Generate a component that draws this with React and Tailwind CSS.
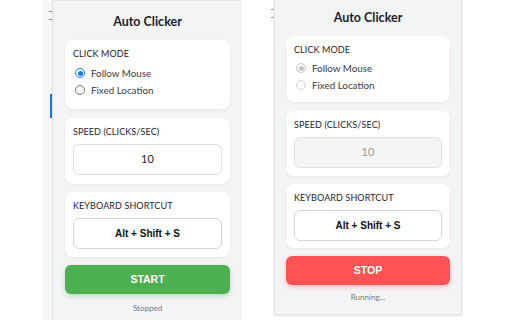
const sans = { fontFamily: "Lato, 'Open Sans', sans-serif" };

const Radio = ({ checked, disabled, label }) => {
  const ring = disabled
    ? checked
      ? "border-[#c4c4c4]"
      : "border-[#d4d4d4]"
    : checked
    ? "border-[#1a73e8]"
    : "border-[#767676]";
  return (
    <div className="flex items-center h-[16px] pl-[2px]">
      <span
        className={`w-[10px] h-[10px] rounded-full border-[1.5px] ${ring} bg-white flex items-center justify-center`}
      >
        {checked && (
          <span
            className={`w-[5px] h-[5px] rounded-full ${disabled ? "bg-[#c4c4c4]" : "bg-[#1a73e8]"}`}
          />
        )}
      </span>
      <span className="ml-[6px] text-[9.8px] text-[#3a3a44]">{label}</span>
    </div>
  );
};

const Card = ({ label, children, pb }) => (
  <div className={`bg-white rounded-[8px] shadow-[0_1px_3px_rgba(0,0,0,0.06)] px-2 pt-2 ${pb}`}>
    <div className="text-[9px] leading-[12px] text-[#1f2230] tracking-[0.1px]">{label}</div>
    {children}
  </div>
);

const Panel = ({ running }) => (
  <div className={`flex flex-col ${running ? "px-[11px]" : "px-3"}`} style={sans}>
    <div className="text-[12.5px] leading-[16px] font-bold text-[#1b1e2b] text-center mb-[10px]">
      Auto Clicker
    </div>
    <Card label="CLICK MODE" pb={running ? "pb-[9px]" : "pb-[11px]"}>
      <div className={running ? "mt-[4px] flex flex-col gap-[1px]" : "mt-[5px] flex flex-col gap-[1px]"}>
        <Radio checked disabled={running} label="Follow Mouse" />
        <Radio disabled={running} label="Fixed Location" />
      </div>
    </Card>
    <div className="h-[9px]" />
    <Card label="SPEED (CLICKS/SEC)" pb={running ? "pb-[8px]" : "pb-[9px]"}>
      <div
        className={`mt-[6px] h-[31px] rounded-[6px] border-[1.5px] flex items-center justify-center text-[11px] ${
          running ? "border-[#e2e2e2] bg-[#f5f5f5] text-[#9a9a9a]" : "border-[#dedede] bg-white text-[#1b1e2b]"
        }`}
      >
        10
      </div>
    </Card>
    <div className="h-[8px]" />
    <Card label="KEYBOARD SHORTCUT" pb={running ? "pb-[7px]" : "pb-[8px]"}>
      <div
        className="mt-[6px] h-[31px] rounded-[6px] border-[1.5px] border-[#d6d6d6] bg-white flex items-center justify-center text-[10px] font-bold text-[#111]"
        style={{ fontFamily: "'Liberation Sans', Arial, sans-serif" }}
      >
        Alt + Shift + S
      </div>
    </Card>
    <div
      className={`mt-[8px] h-[29px] rounded-[6px] flex items-center justify-center text-white font-bold text-[10.5px] ${
        running
          ? "bg-[#ff5252] shadow-[0_2px_5px_rgba(255,82,82,0.35)]"
          : "bg-[#4caf50] shadow-[0_2px_5px_rgba(76,175,80,0.35)]"
      }`}
      style={{ fontFamily: "'Liberation Sans', Arial, sans-serif" }}
    >
      {running ? "STOP" : "START"}
    </div>
    <div className={`${running ? "mt-[6px]" : "mt-[8px]"} text-[8px] leading-[12px] text-center text-[#7a7a7a]`}>
      {running ? "Running..." : "Stopped"}
    </div>
  </div>
);

export default function App() {
  return (
    <div className="w-[512px] h-[320px] bg-white flex overflow-hidden">
      <div className="ml-[43px] w-[9px] h-full bg-[#f6f6f7] relative">
        <span className="absolute right-0 top-[11px] w-[3px] h-[1px] bg-[#888]" />
        <span className="absolute right-0 top-[19px] w-[3px] h-[1px] bg-[#888]" />
        <span className="absolute right-0 top-[94px] w-[2px] h-[24px] bg-[#1a73e8]" />
      </div>
      <div className="w-[190px] h-full bg-[#f3f4f6] border-l border-[#e2e3e6] border-t border-t-[#e6e6e8] pt-[13px]">
        <Panel />
      </div>
      <div className="w-[32px] h-full relative">
        <span className="absolute right-[0px] top-[9px] w-[3px] h-[1px] bg-[#999]" />
        <span className="absolute right-[0px] top-[17px] w-[3px] h-[1px] bg-[#999]" />
      </div>
      <div className="w-[188px] h-[315px] bg-[#f3f4f6] border-x border-b border-[#e4e5e8] shadow-[0_1px_2px_rgba(0,0,0,0.12)] pt-[10px]">
        <Panel running />
      </div>
    </div>
  );
}
